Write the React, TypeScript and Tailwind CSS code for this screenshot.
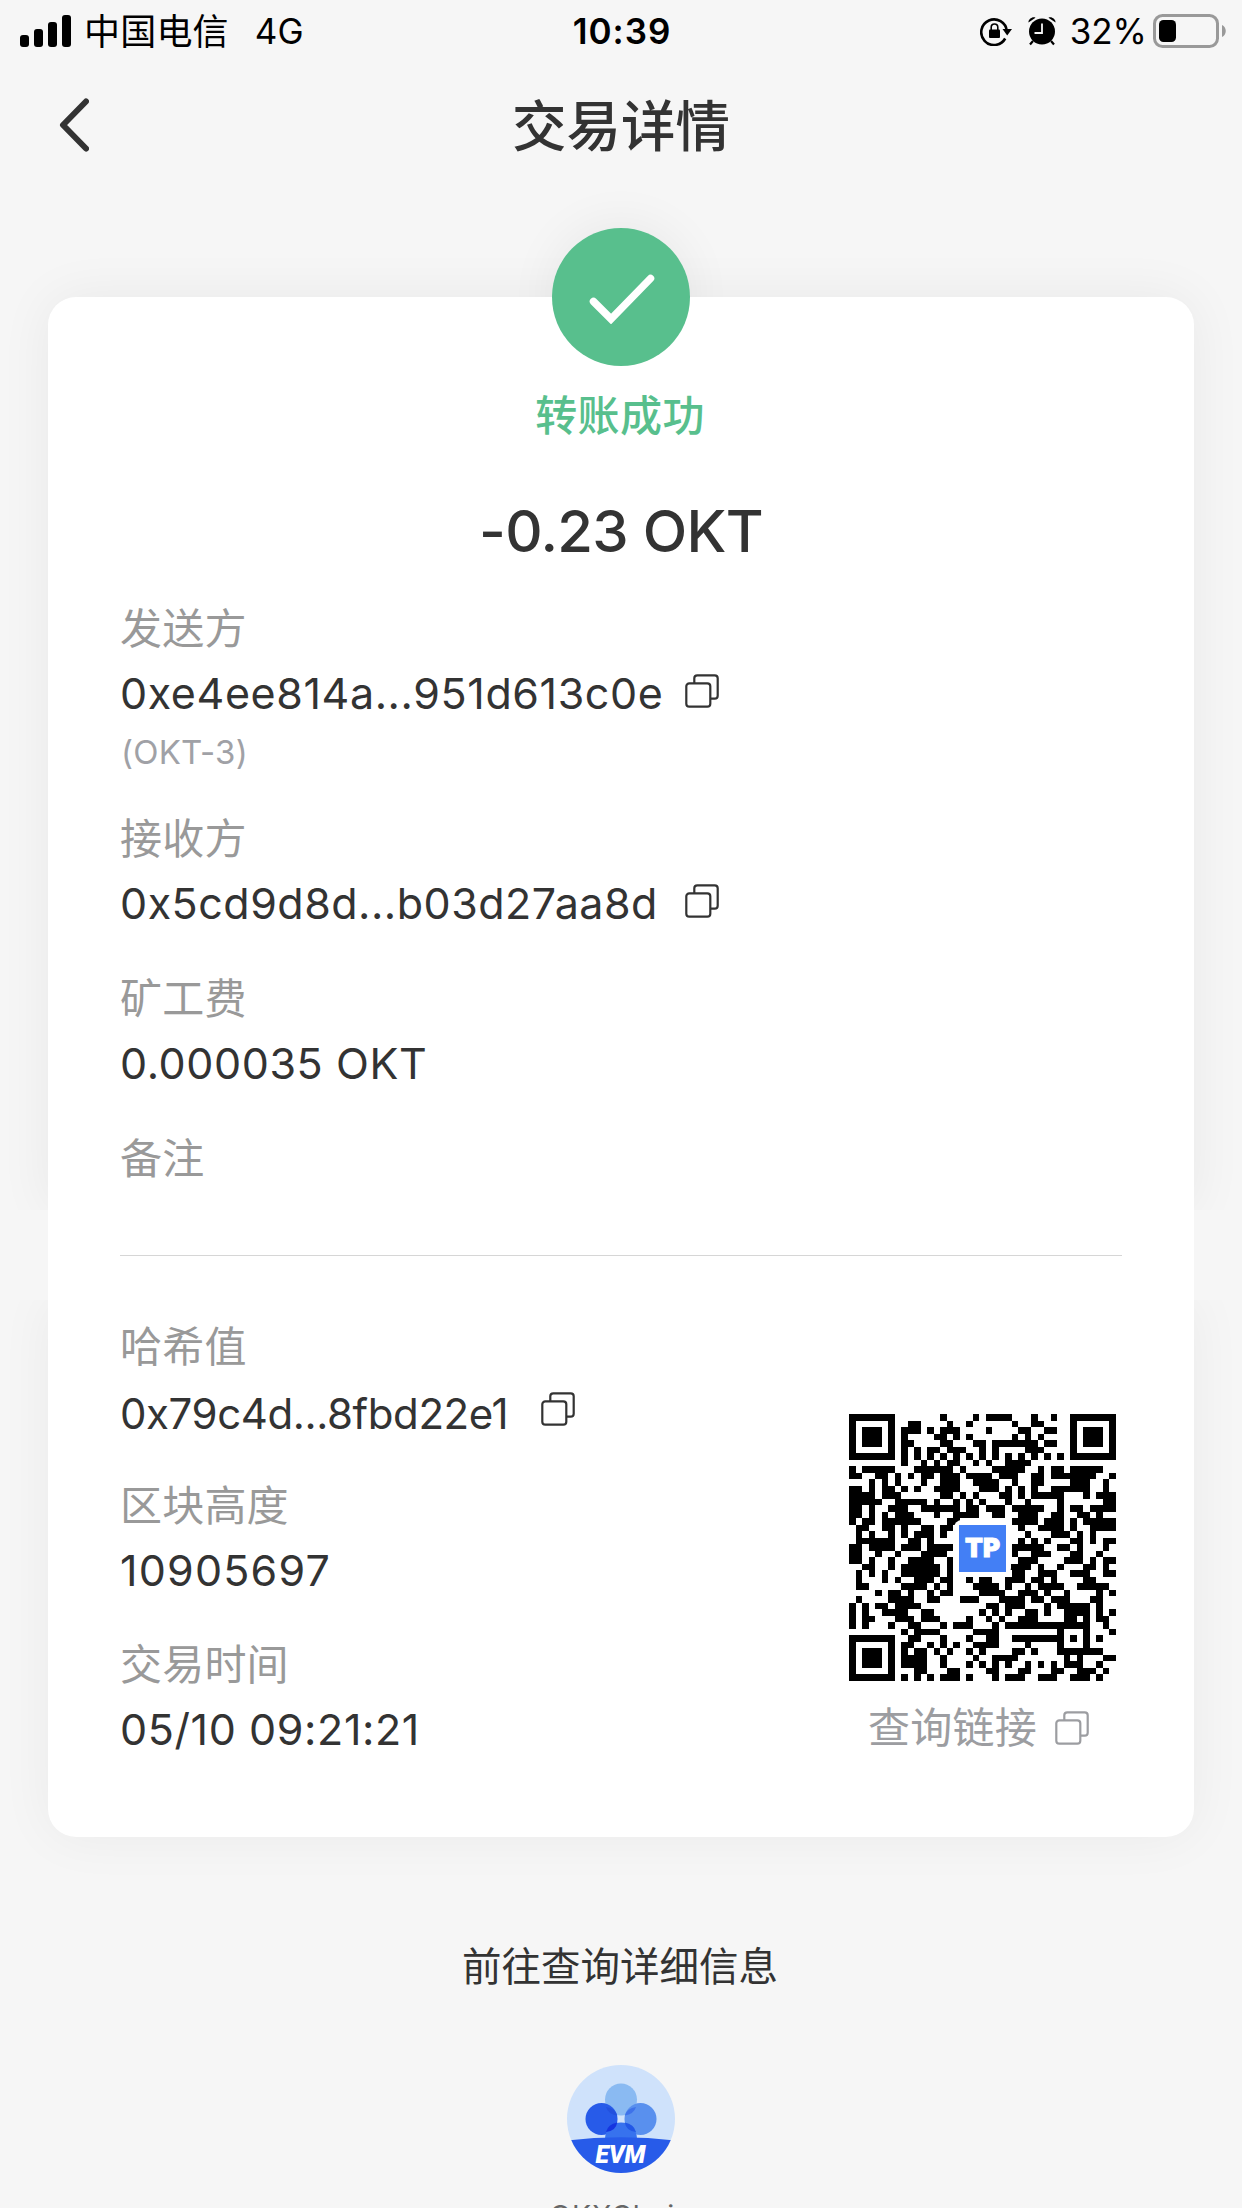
import React from "react";

// Dark modules of the code, one entry per row, as column ranges
const QR_ROWS = [
  "0-6 14 19 21-24 28 31 34-40",
  "0 6 9-10 15 18 25 28-29 34 40",
  "0 2-4 6 8-10 12 14-16 21 26-27 30-31 34 36-38 40",
  "0 2-4 6 8 13-14 16 18 25 27 29 34 36-38 40",
  "0 2-4 6 8-9 14-15 19-20 22-28 30-31 34 36-38 40",
  "0 6 8 10 12-13 15-17 20 22 27-29 34 40",
  "0-6 8 10 12 14 16 18 20 22 24 26 28 30 32 34-40",
  "8 11 13 15-16 19 21 24-27",
  "0 2-6 10-15 17 22-26 29 31-32 34-38",
  "0-1 4-5 7 9 11-12 14-16 18-21 23-25 28-29 31-37 40",
  "3 5 7 11 14-16 19-22 25 28-29 34-36 39",
  "0-1 3 5-6 8 10 13-16 20-22 24 26 28 31-36 39",
  "0-3 5-7 14-15 17 19 23-24 26 28-32 36 38-40",
  "0-4 7-11 13 16 18 20 24 27 32 39-40",
  "0-1 3 6-8 11-16 18-19 21-23 25-29 32 34-35 37-40",
  "0-1 3 5 7-9 13 16-19 22-23 26-28 31-32 35-36 38",
  "0 2-3 5-10 15-16 25-28 30-32 34 36-40",
  "1-2 5-6 8 11-12 14-15 26 29-32 34 37-40",
  "1 3 6 8 10-12 14 27 31-33 35 37",
  "1-6 9-10 12 26 28 30 34-35 37 39-40",
  "0-1 3-6 8-10 12-15 25-29 32-33 35 39",
  "0-1 4 7 11-14 25 28-30 34-35 38",
  "0-1 3 6 9-12 15 26-28 33-35 37 39-40",
  "2-3 6 8-13 15 24-27 29 32 36-37 39",
  "1 3 5 8-13 15 25-26 29-31 34-36 39-40",
  "1 5 7 10-12 14-15 18 20-21 24-26 28-29 31 36-37",
  "1-2 8-11 13 15 19-22 24 27 29-32 35-39",
  "4 6-7 9 12 14-15 20-23 26-28 30 33 38 40",
  "1 6-9 12-13 17-19 23-26 28-29 31-33 37-38",
  "0 2 4-5 7-10 21-22 24-26 30 32-36 38",
  "0 2 5-8 11-12 20 22 24 27-28 30 33-36 38 40",
  "0 2-3 7-9 11-13 18 21 23 26-28 33-34 36 38-39",
  "0 2 6 9-10 14 16-18 22 24-36 39",
  "8 10-13 19-22 32 36 40",
  "0-6 9-10 14 18 21-22 25-32 34 36 38",
  "0 6 8-9 12 14 16 19-22 27 32 36",
  "0 2-4 6 8 10-11 13 15 18 20 25-26 28 32-38",
  "0 2-4 6 8-11 14 19 22-25 33 35 39-40",
  "0 2-4 6 8-11 14 18 20 22 24 27 29 31 33-35 38",
  "0 6 10-11 15-16 21-22 26-27 31-32 35-37 39",
  "0-6 8 10 12 14-16 18 22 24-26 29-31 34-36 38",
];

const qrPath = QR_ROWS.map((row, y) =>
  row
    .split(" ")
    .map((range) => {
      const [from, to = from] = range.split("-").map(Number);
      return `M${from} ${y}h${to - from + 1}v1H${from}z`;
    })
    .join("")
).join("");

const CopyIcon: React.FC<{ className?: string }> = ({ className = "" }) => (
  <svg
    className={`h-[34px] w-[34px] shrink-0 ${className}`}
    viewBox="0 0 34 34"
    fill="none"
    stroke="currentColor"
    strokeWidth="2.2"
  >
    <rect x="1.3" y="9.3" width="24" height="23.4" rx="3" />
    <path d="M9.3 9V4.3a3 3 0 0 1 3-3h17.4a3 3 0 0 1 3 3v17.4a3 3 0 0 1-3 3h-4.2" />
  </svg>
);

const StatusBar = () => (
  <div className="flex h-[62px] items-center text-black">
    <div className="flex flex-1 items-center pl-5">
      <svg className="h-8 w-[51px]" viewBox="0 0 51 32">
        <rect x="0" y="20" width="9" height="12" rx="3" />
        <rect x="14" y="14" width="9" height="18" rx="3" />
        <rect x="28" y="7" width="9" height="25" rx="3" />
        <rect x="42" y="0" width="9" height="32" rx="3" />
      </svg>
      <span className="ml-[13px] pt-[2px] text-[36px] leading-none tracking-[0.2px]">中国电信</span>
      <span className="ml-[26px] pt-px text-[35px] leading-none">4G</span>
    </div>
    <span className="pt-px pr-[3px] text-[35px] leading-none font-semibold tracking-[1px]">10:39</span>
    <div className="flex flex-1 items-center justify-end pr-[15px]">
      <svg className="h-[30px] w-8" viewBox="0 0 32 30" fill="none">
        <path d="M25.2 22.5A12.8 12.8 0 1 1 26.8 15" stroke="black" strokeWidth="2.6" />
        <path d="M22.5 13H32l-4.8 6.5z" fill="black" />
        <rect x="9" y="13.5" width="11" height="8.5" rx="1" fill="black" />
        <path d="M11.2 14v-2.7a3.3 3.3 0 0 1 6.6 0V14" stroke="black" strokeWidth="1.6" />
      </svg>
      <svg className="ml-4 h-[30px] w-7" viewBox="0 0 28 30" fill="none">
        <circle cx="14" cy="15.5" r="13" fill="black" />
        <path d="M0.5 6.5C0 3 5 0 7.5 1.7zM27.5 6.5C28 3 23 0 20.5 1.7z" fill="black" />
        <path d="M5 25l-3 3.5M23 25l3 3.5" stroke="black" strokeWidth="2.2" />
        <path d="M14 7.5V17H6.5" stroke="#f6f6f6" strokeWidth="1.8" />
      </svg>
      <span className="ml-[14px] pt-px text-[35px] leading-none">32%</span>
      <svg className="ml-[6px] h-[34px] w-[74px]" viewBox="0 0 74 34">
        <rect x="1.5" y="1.5" width="63" height="31" rx="8" fill="none" stroke="#999" strokeWidth="3" />
        <rect x="6" y="6" width="17" height="22" rx="4.5" />
        <path d="M69 11c5 2 5 10 0 12z" fill="#999" />
      </svg>
    </div>
  </div>
);

interface FieldProps {
  label: string;
  value?: string;
  valueClass?: string;
  note?: string;
  copyable?: boolean;
}

const Field: React.FC<FieldProps> = ({ label, value, valueClass = "", note, copyable }) => (
  <div>
    <div className="flex h-[60px] items-center text-[42px] leading-none tracking-[0.2px] text-[#999]">{label}</div>
    {value && (
      <div className="flex h-[68px] items-center text-[#333]">
        <span className={`leading-none ${valueClass}`}>{value}</span>
        {copyable && <CopyIcon className="mb-[5px]" />}
      </div>
    )}
    {note && <div className="flex h-[50px] items-center pl-px text-[33px] leading-none tracking-[0.2px] text-[#a0a1a6]">{note}</div>}
  </div>
);

const QrCode = () => (
  <div className="relative h-[267px] w-[267px]">
    <svg className="h-full w-full" viewBox="0 0 41 41" shapeRendering="crispEdges">
      <path d={qrPath} />
    </svg>
    <div className="absolute top-[106px] left-[105px] flex h-[56px] w-[57px] items-center justify-center rounded-[8px] bg-white">
      <div className="flex h-[47px] w-[47px] items-center justify-center bg-[#437ff5] text-[26px] leading-none font-black text-white [-webkit-text-stroke:1px_white]">
        TP
      </div>
    </div>
  </div>
);

const ChainLogo = () => (
  <svg className="h-[108px] w-[108px]" viewBox="0 0 108 108">
    <defs>
      <clipPath id="chain">
        <circle cx="54" cy="54" r="54" />
      </clipPath>
    </defs>
    <g clipPath="url(#chain)">
      <rect width="108" height="108" fill="#cfe2fb" />
      <circle cx="54" cy="34.500" r="16" fill="#8abaf2" />
      <circle cx="34.500" cy="54" r="16" fill="#275be9" />
      <circle cx="73.500" cy="54" r="16" fill="#5990ee" />
      <circle cx="54" cy="73.500" r="16" fill="#3772ee" />
      <path d="M39 42Q41 49 50.200 50.500Q48 43 39 42z" fill="#2351de" />
      <path d="M69 42Q67 49 57.800 50.500Q60 43 69 42z" fill="#3e72ea" />
      <path d="M39 67Q41 59 50.200 57.500Q49 66 39 67z" fill="#1534e0" />
      <path d="M69 67Q67 59 57.800 57.500Q59 66 69 67z" fill="#2257e6" />
      <path d="M0 75.500Q54 69 108 75.500V108H0z" fill="#275be9" />
    </g>
    <text
      x="53.500"
      y="98"
      textAnchor="middle"
      fill="white"
      fontFamily="Roboto, sans-serif"
      fontSize="26"
      fontWeight="900"
      fontStyle="italic"
      textLength="50"
      lengthAdjust="spacingAndGlyphs"
    >
      EVM
    </text>
  </svg>
);

export default function App() {
  return (
    <div className="h-[2208px] w-[1242px] overflow-hidden bg-[#f6f6f6] font-['Inter','Noto_Sans_CJK_SC',sans-serif]">
      <StatusBar />

      <header className="flex h-[126px] items-center pl-[59px]">
        <svg className="h-[54px] w-[30px]" viewBox="0 0 30 54" fill="none" stroke="#333" strokeWidth="6" strokeLinecap="round" strokeLinejoin="round">
          <path d="M27 3.500L4 27l23 23.500" />
        </svg>
        <h1 className="flex-1 pt-[2px] pr-[89px] text-center text-[54.500px] leading-none font-medium text-[#333]">交易详情</h1>
      </header>

      <main className="isolate pt-[109px]">
        <section className="relative mx-12 h-[913px] rounded-t-[28px] bg-white px-[72px] pt-[89px] shadow-[0_0_54px_rgba(0,0,0,0.06)]">
          <div className="absolute -top-[69px] left-[504px] -z-10 h-[138px] w-[138px] rounded-full shadow-[0_-4px_50px_rgba(0,0,0,0.06)]" />
          <div className="absolute -top-[69px] left-[504px] flex h-[138px] w-[138px] items-center justify-center rounded-full bg-[#58bf8d]">
            <svg className="mt-[3px] ml-[2px] h-[50px] w-[66px]" viewBox="0 0 66 50" fill="none" stroke="white" strokeWidth="7.500" strokeLinecap="round">
              <path d="M4.500 27.500L22 45L61.500 4.500" />
            </svg>
          </div>

          <div className="flex h-[60px] items-center justify-center pr-[2px] text-[42px] leading-none font-medium tracking-[0.4px] text-[#58bf8d]">
            转账成功
          </div>
          <div className="flex h-[153px] items-center justify-center pt-[17px] text-[58px] leading-none font-medium tracking-[-0.7px] text-[#333]">
            -0.23 OKT
          </div>

          <div className="flex flex-col gap-8">
            <Field label="发送方" value="0xe4ee814a...951d613c0e" valueClass="w-[565px] text-[43px] tracking-[0.6px]" note="(OKT-3)" copyable />
            <Field label="接收方" value="0x5cd9d8d...b03d27aa8d" valueClass="w-[565px] text-[43px] tracking-[0.5px]" copyable />
            <Field label="矿工费" value="0.000035 OKT" valueClass="text-[43px] tracking-[0.6px]" />
            <Field label="备注" />
          </div>
        </section>

        {/* opaque strip, cuts the side shadows between the two halves */}
        <section className="relative bg-[#f6f6f6] px-12">
          <div className="h-[90px] bg-white px-[72px] pt-[45px]">
            <div className="h-px bg-[#d6d6d6]" />
          </div>
        </section>

        <section className="mx-12 flex h-[537px] justify-between rounded-b-[28px] bg-white pt-[17px] pr-[78px] pl-[72px] shadow-[0_0_54px_rgba(0,0,0,0.05)] [clip-path:inset(0_-48px_-60px_-48px)]">
          <div className="flex flex-col gap-[31px]">
            <Field label="哈希值" value="0x79c4d...8fbd22e1" valueClass="w-[421px] pt-[5px] text-[42px] tracking-[-0.4px]" copyable />
            <Field label="区块高度" value="10905697" valueClass="text-[43px] tracking-[1.2px]" />
            <Field label="交易时间" value="05/10 09:21:21" valueClass="text-[43px] tracking-[0.6px]" />
          </div>
          <div className="flex flex-col items-center pt-[97px]">
            <QrCode />
            <div className="flex items-center pt-[26px] pr-[8px] text-[42px] leading-none tracking-[0.3px] text-[#9c9da1]">
              查询链接
              <CopyIcon className="ml-[18px]" />
            </div>
          </div>
        </section>

        <p className="pt-[110px] pr-[2px] text-center text-[39.500px] leading-[40px] text-[#333]">前往查询详细信息</p>

        <div className="flex flex-col items-center pt-[78px]">
          <ChainLogo />
          <span className="pt-[24px] text-[28.500px] leading-[38px] tracking-[0.8px] text-[#666]">OKXChain</span>
        </div>
      </main>
    </div>
  );
}
